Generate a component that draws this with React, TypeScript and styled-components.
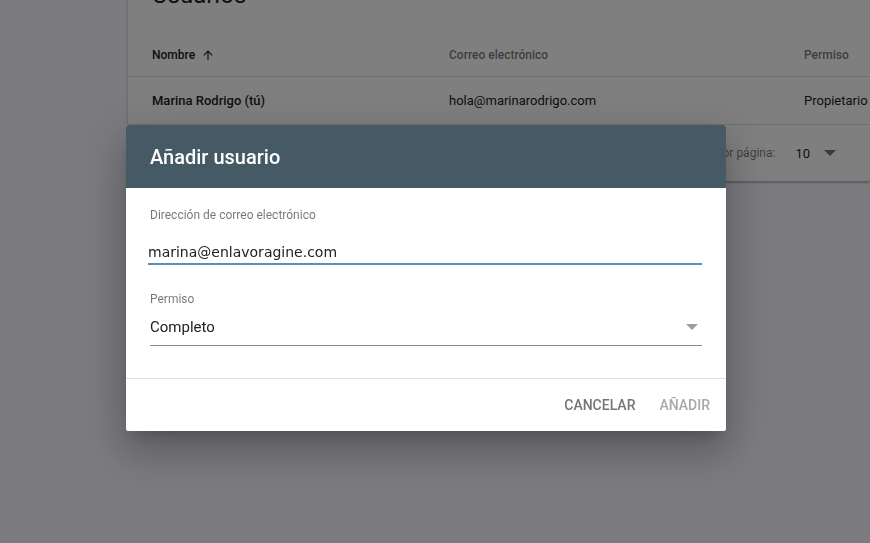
import styled, { createGlobalStyle } from "styled-components";

const GlobalStyle = createGlobalStyle`
  html, body {
    margin: 0;
    padding: 0;
    background: #f6f6fe;
    font-family: Roboto, "Liberation Sans", Arial, sans-serif;
    overflow: hidden;
  }
`;

// página de fondo con la tabla de usuarios
const Page = styled.div`
  height: 543px;
  padding-left: 128px;
  box-sizing: border-box;
`;

const Card = styled.div`
  margin-top: -34px;
  background: #fff;
  box-shadow: 0 1px 3px rgba(0, 0, 0, 0.2), 0 2px 2px rgba(0, 0, 0, 0.14);
  border-radius: 2px;
`;

const CardTitle = styled.h2`
  margin: 0;
  height: 68px;
  box-sizing: border-box;
  padding: 17px 0 0 24px;
  font-size: 24px;
  line-height: 24px;
  font-weight: 400;
  color: #212121;
`;

const Row = styled.div<{ $h: number; $header?: boolean }>`
  display: grid;
  grid-template-columns: 297px 355px 1fr;
  align-items: center;
  height: ${(p) => p.$h}px;
  padding-left: 24px;
  border-bottom: 1px solid #e0e0e0;
  font-size: ${(p) => (p.$header ? 12 : 13)}px;
  font-weight: ${(p) => (p.$header ? 500 : 400)};
  color: ${(p) => (p.$header ? "rgba(0,0,0,0.54)" : "#212121")};
  white-space: nowrap;
`;

const Cell = styled.div<{ $strong?: boolean }>`
  display: flex;
  align-items: center;
  gap: 6px;
  font-weight: ${(p) => (p.$strong ? 500 : "inherit")};
  color: ${(p) => (p.$strong ? "#212121" : "inherit")};
`;

const Footer = styled.div`
  height: 56px;
  display: flex;
  align-items: center;
  justify-content: flex-end;
  padding-right: 34px;
  font-size: 12px;
  color: rgba(0, 0, 0, 0.54);
  gap: 20px;
`;

const PageSize = styled.div`
  display: flex;
  align-items: center;
  gap: 14px;
  color: #212121;
  font-size: 13px;
`;

// capa oscura y diálogo
const Scrim = styled.div`
  position: fixed;
  inset: 0;
  background: rgba(0, 0, 0, 0.5);
  padding: 125px 0 0 126px;
`;

const Dialog = styled.div`
  width: 600px;
  background: #fff;
  border-radius: 2px;
  overflow: hidden;
  box-shadow: 0 11px 15px -7px rgba(0, 0, 0, 0.2), 0 24px 38px 3px rgba(0, 0, 0, 0.14),
    0 9px 46px 8px rgba(0, 0, 0, 0.12);
`;

const DialogHeader = styled.div`
  height: 63px;
  background: #455a64;
  display: flex;
  align-items: center;
  padding-left: 24px;
  color: #fff;
  font-size: 20px;
  font-weight: 500;
`;

const DialogBody = styled.div`
  padding: 20px 24px 32px 24px;
  display: flex;
  flex-direction: column;
  gap: 27px;
  border-bottom: 1px solid #e0e0e0;
`;

const Field = styled.div`
  display: flex;
  flex-direction: column;
`;

const Label = styled.label`
  font-size: 12px;
  color: rgba(0, 0, 0, 0.54);
  line-height: 14px;
`;

const TextInput = styled.input`
  margin-top: 21px;
  border: none;
  border-bottom: 2px solid #5c8fb8;
  outline: none;
  padding: 0 0 2px 0;
  margin-left: -2px;
  font-family: "DejaVu Sans", sans-serif;
  font-size: 14px;
  line-height: 18px;
  color: #212121;
  background: transparent;
`;

const Select = styled.div`
  margin-top: 3px;
  height: 36px;
  display: flex;
  align-items: center;
  justify-content: space-between;
  border-bottom: 1px solid #8a8a8a;
  font-size: 15px;
  color: #212121;
  padding-right: 4px;
`;

const Actions = styled.div`
  height: 52px;
  display: flex;
  align-items: center;
  justify-content: flex-end;
  padding-right: 16px;
  gap: 24px;
`;

const ActionButton = styled.button<{ $disabled?: boolean }>`
  border: none;
  background: none;
  padding: 0;
  font-family: Roboto, "Liberation Sans", sans-serif;
  font-size: 14px;
  font-weight: 500;
  text-transform: uppercase;
  color: ${(p) => (p.$disabled ? "#a8a8a8" : "#757575")};
`;

const Caret = ({ color }: { color: string }) => (
  <svg width="12" height="6" viewBox="0 0 10 5">
    <path d="M0 0l5 5 5-5z" fill={color} />
  </svg>
);

const ArrowUp = () => (
  <svg width="14" height="14" viewBox="0 0 24 24">
    <path d="M4 12l1.41 1.41L11 7.83V20h2V7.83l5.58 5.59L20 12l-8-8-8 8z" fill="#212121" />
  </svg>
);

export default function App() {
  return (
    <>
      <GlobalStyle />
      <Page>
        <Card>
          <CardTitle>Usuarios</CardTitle>
          <Row $h={42} $header>
            <Cell $strong>
              Nombre <ArrowUp />
            </Cell>
            <Cell>Correo electrónico</Cell>
            <Cell>Permiso</Cell>
          </Row>
          <Row $h={47}>
            <Cell $strong>Marina Rodrigo (tú)</Cell>
            <Cell>hola@marinarodrigo.com</Cell>
            <Cell>Propietario</Cell>
          </Row>
          <Footer>
            <span>Filas por página:</span>
            <PageSize>
              10 <Caret color="rgba(0,0,0,0.54)" />
            </PageSize>
          </Footer>
        </Card>
      </Page>
      <Scrim>
        <Dialog>
          <DialogHeader>Añadir usuario</DialogHeader>
          <DialogBody>
            <Field>
              <Label>Dirección de correo electrónico</Label>
              <TextInput defaultValue="marina@enlavoragine.com" />
            </Field>
            <Field>
              <Label>Permiso</Label>
              <Select>
                <span>Completo</span>
                <Caret color="#9e9e9e" />
              </Select>
            </Field>
          </DialogBody>
          <Actions>
            <ActionButton>Cancelar</ActionButton>
            <ActionButton $disabled>Añadir</ActionButton>
          </Actions>
        </Dialog>
      </Scrim>
    </>
  );
}
